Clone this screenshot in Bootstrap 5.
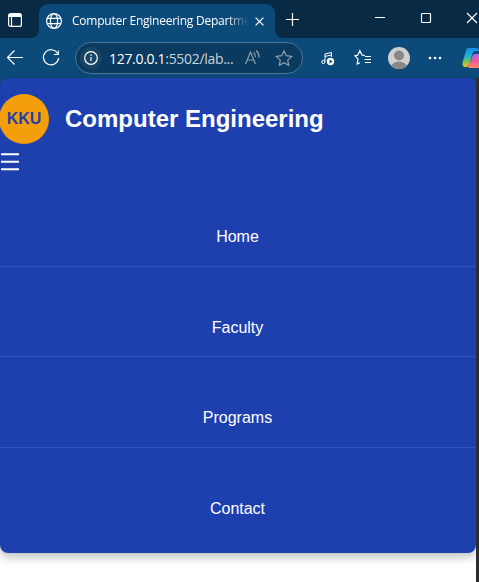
<!DOCTYPE html>
<html lang="en">
<head>
<meta charset="utf-8">
<meta name="viewport" content="width=device-width, initial-scale=1">
<title>Computer Engineering Department</title>
<link href="https://cdn.jsdelivr.net/npm/bootstrap@5.3.0/dist/css/bootstrap.min.css" rel="stylesheet">
<style>
body{width:479px;height:582px;font-family:"Liberation Sans",Arial,sans-serif;background:#fff}
svg{display:block;flex:none;fill:none;stroke:#fff;stroke-width:1.2}
.titlebar{height:38px;background:#082a45}
.tab-lead{width:39px;padding:13px 0 0 8px;border-bottom-right-radius:8px;background:#082a45}
.browser-tab{width:236px;height:34px;margin-top:4px;padding-left:7px;background:#0c4a7a;border-radius:9px 9px 0 0;color:#fff;font:12px "Open Sans","Noto Sans",sans-serif}
.tab-corner-left,.tab-tail-bg{background:linear-gradient(#082a45 24px,#0c4a7a 24px)}
.tab-title{width:176px;margin-left:10px;letter-spacing:-.24px;line-height:32px;-webkit-mask-image:linear-gradient(90deg,#000 88%,transparent);mask-image:linear-gradient(90deg,#000 88%,transparent)}
.tab-close{margin-left:7px}
.tab-tail{width:204px;height:38px;background:#082a45;border-bottom-left-radius:8px;padding-left:11px}
.toolbar{height:40px;background:#0c4a7a;padding-left:6px}
.address{width:228px;height:32px;margin-left:14px;border:1px solid #4d7796;background:#0a3a5f;padding-left:4px;font:14px "Open Sans","Noto Sans",sans-serif;color:#c8d4dd}
.info-dot{width:22px;height:22px;background:#174563}
.url{width:135px;margin-left:7px;letter-spacing:-.31px}
.viewport{height:504px;background:#fff}
.page-side{width:476px;background:linear-gradient(#0c4a7a 20px,#fff 20px)}
.page-header{height:475px;padding-top:16px;background:#1e40af;border-radius:8px;box-shadow:0 4px 10px rgba(0,0,0,.25);color:#fff}
.scroll-track{width:3px;background:#2d2d2d}
.logo{width:50px;height:50px;margin-left:-1px;background:#f59e0b;color:#1e40af;font-size:16px}
.site-name{font-size:24px;line-height:50px}
.menu-icon{height:32px;padding-top:9px}
.menu-link{height:90.5px;padding:49px 1px 0 0;line-height:24px;font-size:16px;color:#fff;border-bottom:1px solid rgba(255,255,255,.1)}
.menu-link:last-child{border:0}
</style>
<script src="https://cdn.jsdelivr.net/npm/bootstrap@5.3.0/dist/js/bootstrap.bundle.min.js"></script>
</head>
<body class="overflow-hidden">
<div class="titlebar d-flex">
  <div class="tab-corner-left"><div class="tab-lead h-100">
    <svg width="14" height="14" viewBox="0 0 14 14"><rect x=".6" y=".6" width="12.8" height="12.8" rx="2"/><path d="M1 2.500h12" stroke-width="3"/><path d="M3.500 4v9"/></svg>
  </div></div>
  <div class="browser-tab d-flex align-items-center">
    <svg width="16" height="16" viewBox="0 0 16 16"><circle cx="8" cy="8" r="7.400"/><ellipse cx="8" cy="8" rx="3.600" ry="7.400"/><path d="M1.300 5.300h13.400M1.300 10.700h13.400"/></svg>
    <div class="tab-title text-nowrap">Computer Engineering Departme</div>
    <svg class="tab-close" width="9" height="9" viewBox="0 0 9 9"><path d="m.6.6 7.800 7.800m0-7.800L.6 8.400"/></svg>
  </div>
  <div class="tab-tail-bg"><div class="tab-tail">
    <svg width="193" height="38" viewBox="286 0 193 38"><path d="M286 19.500h13M292.500 13v13M375 17.500h10M467 13l10 10m0-10-10 10"/><rect x="421.500" y="13.500" width="9" height="9" rx=".8"/></svg>
  </div></div>
</div>
<div class="toolbar d-flex align-items-center">
  <svg width="55" height="40" viewBox="6 38 55 40"><path d="M23 57.500H7.500m7-7-7 7 7 7M57.600 53.500a7.600 7.600 0 1 0 1 4.500M58.300 50.500v4h-4.300"/></svg>
  <div class="address rounded-pill d-flex align-items-center">
    <div class="info-dot rounded-circle d-flex align-items-center justify-content-center"><svg width="14" height="14" viewBox="0 0 14 14"><circle cx="7" cy="7" r="6.300"/><path d="M7 6v4M7 3.500V5"/></svg></div>
    <div class="url text-nowrap"><span class="text-white">127.0.0.1</span>:5502/lab...</div>
    <svg width="50" height="30" viewBox="244 43 50 30"><g stroke="#8ea0ad"><path d="m245.500 64 5-12 5 12m-8.200-4h6.400M253.500 52.500q2 1.500 2 4.500M256 50.500q3.400 2.500 3 7"/><path d="m284 50.800 2.300 4.900 5.400.7-4 3.700 1 5.300-4.700-2.600-4.700 2.600 1-5.300-4-3.700 5.400-.7z"/></g></svg>
  </div>
  <svg width="176" height="40" viewBox="303 38 176 40">
    <defs><linearGradient id="cool" x2="0" y2="1"><stop stop-color="#168bea"/><stop offset=".45" stop-color="#20b5cf"/><stop offset=".75" stop-color="#8fc33d"/><stop offset="1" stop-color="#f3cf20"/></linearGradient><linearGradient id="warm" x2="0" y2="1"><stop stop-color="#b069ea"/><stop offset=".5" stop-color="#ee589a"/><stop offset="1" stop-color="#fb8863"/></linearGradient></defs>
    <path stroke-width="1" d="M325 61.500V54l6.500-1.600V57M325 56.500l6.500-1.600"/><circle cx="323.300" cy="62" r="1.600" stroke-width="1"/><circle cx="330.500" cy="61.500" r="3.700" fill="#fff" stroke="none"/><path d="m329.500 59.400 3.200 2.100-3.200 2.100z" fill="#0c4a7a" stroke="none"/>
    <path d="m365 55.500-2.800-.3-2.400-4.500-2.100 4.500-2.700.6 3 3.400-.8 4.800 2.800-1.300M365 56.500h6M364.500 59.500h6.500M365 62.500h6"/>
    <clipPath id="face"><circle cx="399" cy="58" r="11"/></clipPath><g clip-path="url(#face)" stroke="none"><path d="M388 47h22v22h-22z" fill="#d2d0ce"/><circle cx="399" cy="55.500" r="5" fill="#8a8886"/><ellipse cx="399" cy="67.500" rx="8" ry="6" fill="#8a8886"/></g>
    <g fill="#fff" stroke="none"><circle cx="430" cy="58" r="1.300"/><circle cx="435" cy="58" r="1.300"/><circle cx="440" cy="58" r="1.300"/></g>
    <g stroke="none"><path d="M468 48h8q2.500 0 3 3h-4q-2 0-2.700 3l-2.600 10q-1 3-4 3-4.200 0-3-5l3-10q1-4 2.300-4z" fill="url(#cool)"/><path d="M475 54h4v14h-9.500q-2 0-3-3 3 0 4-3l2-6q.5-2 2.500-2z" fill="url(#warm)"/></g>
  </svg>
</div>
<main class="viewport d-flex">
  <div class="page-side">
    <header class="page-header">
      <div class="d-flex align-items-center gap-3">
        <div class="logo rounded-circle fw-bold d-flex align-items-center justify-content-center">KKU</div>
        <h1 class="site-name fw-bold mb-0">Computer Engineering</h1>
      </div>
      <div class="menu-icon"><svg width="20" height="18" viewBox="0 0 20 18"><path stroke-width="2" d="M1 1.200h18M1 8.700h18M1 16.200h18"/></svg></div>
      <nav class="d-flex flex-column text-center">
        <a class="menu-link text-decoration-none" href="#">Home</a>
        <a class="menu-link text-decoration-none" href="#">Faculty</a>
        <a class="menu-link text-decoration-none" href="#">Programs</a>
        <a class="menu-link text-decoration-none" href="#">Contact</a>
      </nav>
    </header>
  </div>
  <div class="scroll-track"></div>
</main>
</body>
</html>
